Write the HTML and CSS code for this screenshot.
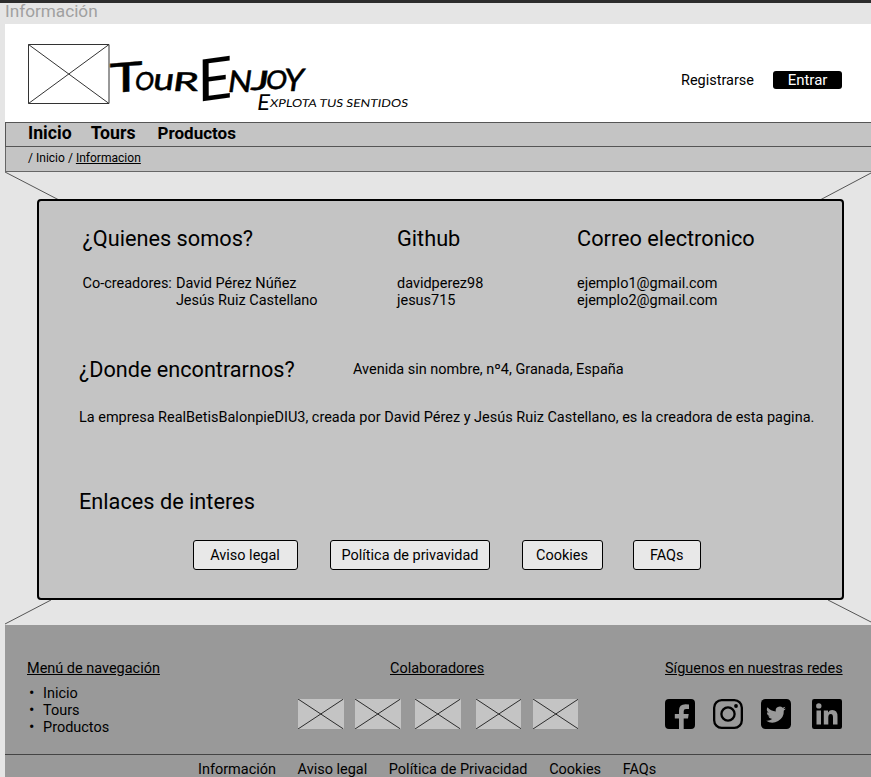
FILE: index.html
```html
<!DOCTYPE html>
<html lang="es">
<head>
<meta charset="utf-8">
<title>TourEnjoy - Información</title>
<link rel="stylesheet" href="styles.css">
</head>
<body>
<svg width="0" height="0" class="defs">
  <symbol id="cross" viewBox="0 0 46 30" preserveAspectRatio="none"><path d="M0 0 46 30M46 0 0 30" stroke="#2a2a2a" stroke-width="1" fill="none"/></symbol>
</svg>
<div class="frame-label">Información</div>
<div class="frame">
  <header class="header">
    <svg class="logo-box" viewBox="0 0 82 60"><path d="M.5.5H81V59.500H.5ZM.5.5 81 59.500M81 .5.5 59.500" fill="none" stroke="#333" stroke-width="1"/></svg>
    <svg class="wordmark" viewBox="0 0 310 70" role="img">
      <g transform="skewX(-8)" lengthAdjust="spacingAndGlyphs">
        <text class="brand"><tspan x="6" y="46" font-size="41" textLength="33" lengthAdjust="spacingAndGlyphs" rotate="-6">T</tspan><tspan x="30" y="43" font-size="25" textLength="19" lengthAdjust="spacingAndGlyphs">O</tspan><tspan x="48" y="43" font-size="31" textLength="21" lengthAdjust="spacingAndGlyphs">u</tspan><tspan x="68" y="44" font-size="26" textLength="26" lengthAdjust="spacingAndGlyphs">R</tspan><tspan class="thin" x="95" y="55" font-size="59" textLength="35" lengthAdjust="spacingAndGlyphs" rotate="-8">E</tspan><tspan x="123" y="45" font-size="30" textLength="24" lengthAdjust="spacingAndGlyphs">N</tspan><tspan x="146" y="43" font-size="27" textLength="18" lengthAdjust="spacingAndGlyphs">J</tspan><tspan x="161" y="42" font-size="26" textLength="21" lengthAdjust="spacingAndGlyphs">O</tspan><tspan x="179" y="44" font-size="31" textLength="20" lengthAdjust="spacingAndGlyphs">Y</tspan></text>
        <text class="tagline"><tspan x="155" y="63" font-size="22">E</tspan><tspan x="168" y="60" textLength="138" lengthAdjust="spacingAndGlyphs">XPLOTA TUS SENTIDOS</tspan></text>
      </g>
    </svg>
    <a class="register">Registrarse</a>
    <a class="login">Entrar</a>
  </header>
  <nav class="nav"><a>Inicio</a><a>Tours</a><a>Productos</a></nav>
  <div class="crumbs">/ Inicio / <u>Informacion</u></div>
  <main class="main">
    <svg class="rays" viewBox="0 0 866 453"><path d="M0 0 54 28M815 28 866 1M0 452 46 428M823 428 866 450" fill="none" stroke="#444" stroke-width=".9"/></svg>
    <section class="panel">
      <div class="about">
        <h2>¿Quienes somos?</h2><h2>Github</h2><h2>Correo electronico</h2>
        <div class="people"><span>Co-creadores:</span><span>David Pérez Núñez<br>Jesús Ruiz Castellano</span></div>
        <div>davidperez98<br>jesus715</div>
        <div>ejemplo1@gmail.com<br>ejemplo2@gmail.com</div>
      </div>
      <div class="where"><h2>¿Donde encontrarnos?</h2><span>Avenida sin nombre, nº4, Granada, España</span></div>
      <p class="company">La empresa RealBetisBalonpieDIU3, creada por David Pérez y Jesús Ruiz Castellano, es la creadora de esta pagina.</p>
      <h2 class="links-title">Enlaces de interes</h2>
      <div class="buttons"><a class="b1">Aviso legal</a><a class="b2">Política de privavidad</a><a class="b3">Cookies</a><a class="b4">FAQs</a></div>
    </section>
  </main>
  <footer class="footer">
    <div class="columns">
      <div class="menu"><h3>Menú de navegación</h3><ul><li>Inicio</li><li>Tours</li><li>Productos</li></ul></div>
      <div class="partners"><h3>Colaboradores</h3>
        <div class="thumbs"><svg><use href="#cross"/></svg><svg><use href="#cross"/></svg><svg><use href="#cross"/></svg><svg><use href="#cross"/></svg><svg><use href="#cross"/></svg></div>
      </div>
      <div class="social"><h3>Síguenos en nuestras redes</h3>
        <div class="icons">
          <svg viewBox="0 0 30 30"><path fill-rule="evenodd" d="M4 0H26Q30 0 30 4V26Q30 30 26 30H18.700V19.500H23L23.700 15H18.700V12Q18.700 9.900 21 9.900H24V5.600Q22.500 5.300 20.500 5.300 14 5.300 14 11.500V15H9.800V19.500H14V30H4Q0 30 0 26V4Q0 0 4 0Z"/></svg>
          <svg viewBox="0 0 30 30" fill="none" stroke="#000" stroke-width="2.300"><rect x="1.150" y="1.150" width="27.700" height="27.700" rx="7.500"/><circle cx="15" cy="15" r="6.600"/><circle cx="23" cy="7" r="1.900" fill="#000" stroke="none"/></svg>
          <svg viewBox="0 0 30 30"><rect width="30" height="30" rx="4.500"/><path fill="#999" d="M24.800 9.400a8 8 0 0 1-2.300.6 4 4 0 0 0 1.800-2.200 8 8 0 0 1-2.600 1 4.050 4.050 0 0 0-6.900 3.700A11.500 11.500 0 0 1 6.500 8.300a4.050 4.050 0 0 0 1.250 5.400 4 4 0 0 1-1.800-.5 4.050 4.050 0 0 0 3.200 4 4 4 0 0 1-1.800.1 4.050 4.050 0 0 0 3.800 2.800A8.100 8.100 0 0 1 5.200 21.800 11.500 11.500 0 0 0 22.800 11.500a8 8 0 0 0 2-2.100Z"/></svg>
          <svg viewBox="0 0 30 30"><rect width="30" height="30" rx="2.200"/><g fill="#999"><circle cx="6.800" cy="6.900" r="2.700"/><path d="M4.500 11.500H9V25.500H4.500ZM11.800 11.500H16V13.500Q17.500 11.100 20.200 11.100 25.500 11.100 25.500 17.500V25.500H21V18.400Q21 15 18.800 15 16.300 15 16.300 18.400V25.500H11.800Z"/></g></svg>
        </div>
      </div>
    </div>
    <div class="legal"><a>Información</a><a>Aviso legal</a><a>Política de Privacidad</a><a>Cookies</a><a>FAQs</a></div>
  </footer>
</div>
</body>
</html>
```
FILE: styles.css
```css
* { box-sizing: border-box; }
body {
  margin: 0;
  height: 777px;
  overflow: hidden;
  background: #e5e5e5;
  border-top: 3px solid #2c2c2c;
  font: 14.480px/17px Roboto, sans-serif;
  color: #000;
}
.defs { position: absolute; }
h2, h3, p, ul { margin: 0; padding: 0; font-weight: 400; }
.frame-label { height: 21px; padding-left: 5px; line-height: 16px; font-size: 17.200px; color: #a0a0a0; }
.frame { margin-left: 5px; width: 866px; }

.header { display: flex; align-items: flex-start; height: 98px; background: #fff; }
.logo-box { width: 82px; height: 60px; margin: 20px 0 0 23px; }
.wordmark { width: 310px; height: 70px; margin: 23px 0 0; overflow: visible; }
.brand, .tagline { font-family: "Rock Salt", Lato, sans-serif; }
.brand { font-weight: 500; stroke: #000; stroke-width: .4; stroke-linejoin: round; }
.brand .thin { font-weight: 400; stroke-width: 0; }
.tagline { font-size: 11px; }
.register { margin: 48px 0 0 261px; }
.login { margin: 47px 29px 0 auto; width: 69px; height: 18px; border-radius: 3px; background: #000; color: #fff; text-align: center; line-height: 19px; font-size: 15px; }

.nav { display: flex; height: 25px; padding-left: 22px; gap: 19px; border: 1px solid #555; border-right: 0; background: #c4c4c4; font-size: 17.700px; font-weight: 700; line-height: 21px; }
.nav a:last-child { margin-left: 3px; font-size: 17px; }
.crumbs { height: 25px; padding: 3px 0 0 22px; border: 1px solid #666; border-width: 0 0 1px 1px; background: #c4c4c4; font-size: 12.050px; }

.main { display: grid; height: 453px; }
.rays, .panel { grid-area: 1 / 1; }
.rays { width: 866px; height: 453px; }
.panel { width: 807px; height: 401px; margin: 27px 0 0 32px; padding: 25px 0 0 40px; border: 2px solid #000; border-radius: 4px; background: #c4c4c4; }
h2 { font-size: 21.720px; line-height: 26px; }
.about { display: grid; grid-template-columns: 314.500px 180px 1fr; row-gap: 23px; padding-left: 3.500px; }
.people { display: flex; gap: 4px; }
.where { display: flex; align-items: flex-start; margin-top: 48px; }
.where h2 { width: 274px; font-size: 21.650px; }
.where span { margin-top: 4px; }
.company { margin-top: 26px; white-space: nowrap; }
.links-title { margin-top: 63px; }
.buttons { display: flex; margin: 25px 0 0 113.500px; }
.buttons a { height: 30px; border: 1.500px solid #000; border-radius: 3px; background: #e8e8e8; line-height: 29px; text-align: center; white-space: nowrap; }
.b1 { width: 105px; margin-right: 32.500px; }
.b2 { width: 160px; margin-right: 31.500px; }
.b3 { width: 81px; margin-right: 30.500px; }
.b4 { width: 67.500px; }

.footer { height: 153px; background: #999; }
.columns { display: flex; height: 130px; padding-top: 35px; border-bottom: 1px solid #444; }
h3 { font-size: 14.480px; line-height: 17px; text-decoration: underline; white-space: nowrap; }
.menu { width: 271px; padding-left: 22px; }
.menu ul { margin-top: 8px; padding-left: 16px; list-style: none; }
.menu li { height: 17px; }
.menu li::before { content: "•"; display: inline-block; width: 14px; margin-left: -14px; font-size: 16px; line-height: 12px; }
.partners { width: 389px; padding-left: 22px; }
.partners h3 { margin-left: 92px; }
.thumbs { display: flex; margin-top: 22px; }
.thumbs svg { width: 45.500px; height: 30px; margin-right: 14.700px; background: #c4c4c4; }
.thumbs svg:nth-child(1), .thumbs svg:nth-child(4) { margin-right: 11.700px; }
.icons { display: flex; margin-top: 22px; }
.icons svg { width: 30px; height: 30px; margin-right: 18.200px; }
.icons svg:nth-child(3) { margin-right: 20.500px; }
.legal { display: flex; gap: 21.600px; padding: 6px 0 0 193px; }
```
